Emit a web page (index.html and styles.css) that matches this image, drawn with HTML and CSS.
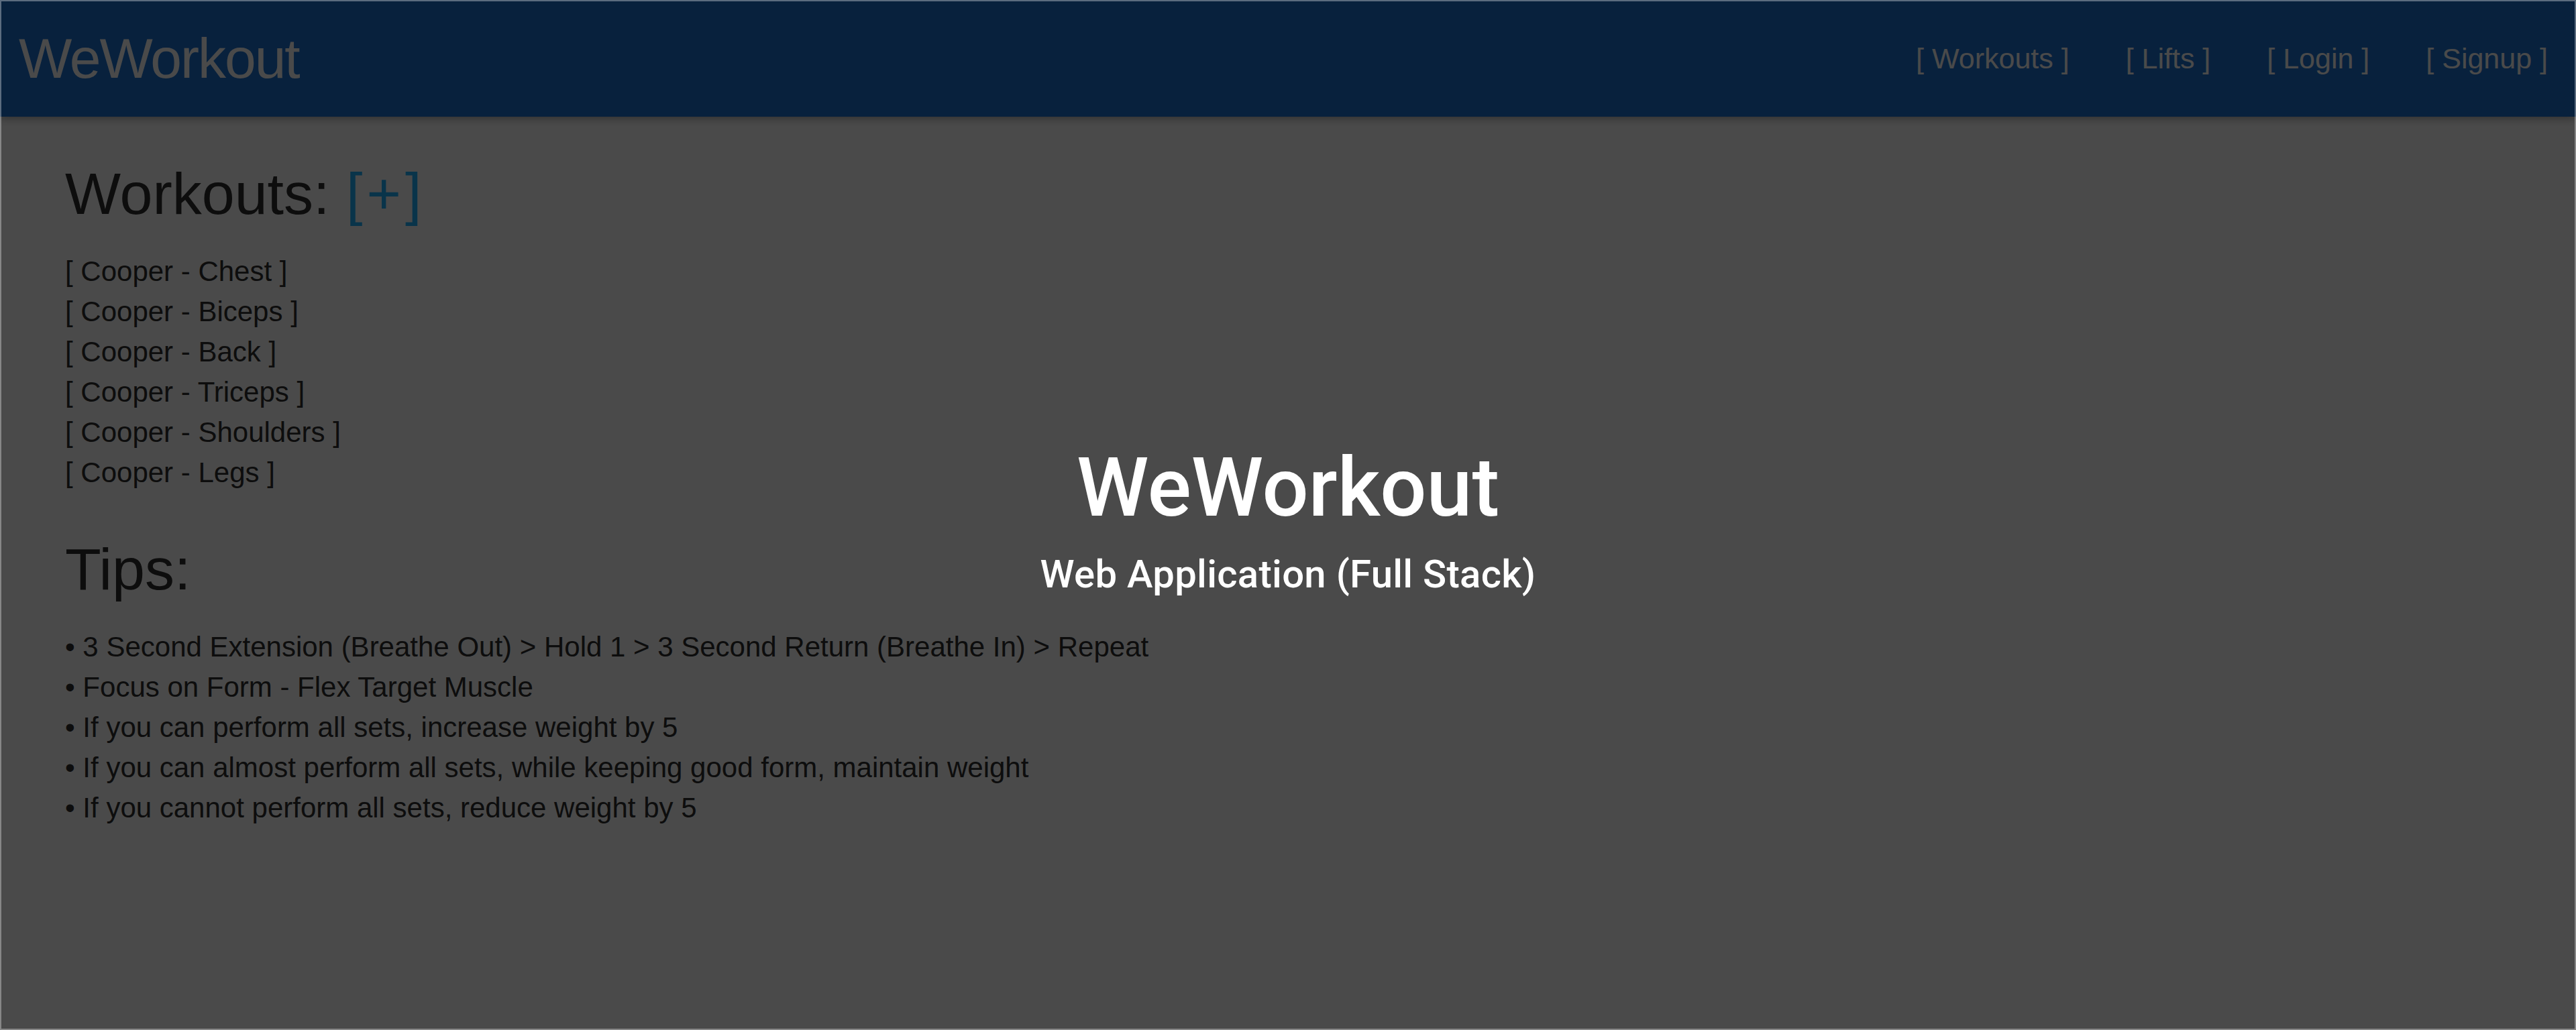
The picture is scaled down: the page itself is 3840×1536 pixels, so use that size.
FILE: index.html
```html
<!DOCTYPE html>
<html lang="en">
<head>
<meta charset="utf-8">
<title>WeWorkout</title>
<link rel="stylesheet" href="styles.css">
</head>
<body>
<div class="page">
  <header class="navbar">
    <a class="brand" href="#">WeWorkout</a>
    <nav class="nav-links">
      <a href="#">[ Workouts ]</a>
      <a href="#">[ Lifts ]</a>
      <a href="#">[ Login ]</a>
      <a href="#">[ Signup ]</a>
    </nav>
  </header>
  <main class="content">
    <h1 class="section-title">Workouts: <a class="add-link" href="#">[+]</a></h1>
    <ul class="workout-list">
      <li><a href="#">[ Cooper - Chest ]</a></li>
      <li><a href="#">[ Cooper - Biceps ]</a></li>
      <li><a href="#">[ Cooper - Back ]</a></li>
      <li><a href="#">[ Cooper - Triceps ]</a></li>
      <li><a href="#">[ Cooper - Shoulders ]</a></li>
      <li><a href="#">[ Cooper - Legs ]</a></li>
    </ul>
    <h1 class="section-title tips-title">Tips:</h1>
    <ul class="tips-list">
      <li>• 3 Second Extension (Breathe Out) &gt; Hold 1 &gt; 3 Second Return (Breathe In) &gt; Repeat</li>
      <li>• Focus on Form - Flex Target Muscle</li>
      <li>• If you can perform all sets, increase weight by 5</li>
      <li>• If you can almost perform all sets, while keeping good form, maintain weight</li>
      <li>• If you cannot perform all sets, reduce weight by 5</li>
    </ul>
  </main>
  <div class="overlay">
    <h2 class="overlay-title">WeWorkout</h2>
    <p class="overlay-subtitle">Web Application (Full Stack)</p>
  </div>
  <div class="frame"></div>
</div>
</body>
</html>
```
FILE: styles.css
```css
html, body {
  margin: 0;
  padding: 0;
}

body {
  font-family: "Liberation Sans", Arial, sans-serif;
  color: #333333;
  background: #ffffff;
}

a {
  color: inherit;
  text-decoration: none;
}

.page {
  position: relative;
  min-height: 1536px;
  background: #ffffff;
  overflow: hidden;
}

.navbar {
  display: flex;
  align-items: center;
  justify-content: space-between;
  height: 174px;
  padding: 0 42px 0 28px;
  background: #1c73d2;
  box-shadow: 0 3px 12px rgba(0, 0, 0, 0.35);
  position: relative;
}

.brand {
  color: #ffffff;
  font-size: 84px;
  letter-spacing: -2px;
}

.nav-links {
  display: flex;
  gap: 84px;
  font-size: 43px;
}

.nav-links a {
  color: #ffffff;
}

.content {
  padding: 66px 96px 0 97px;
}

.section-title {
  margin: 0;
  font-size: 88px;
  font-weight: 400;
  line-height: 97px;
  color: #2e2e2e;
}

.add-link {
  color: #22b2ff;
  letter-spacing: 0.07em;
}

.workout-list,
.tips-list {
  list-style: none;
  margin: 0;
  padding: 0;
  font-size: 42px;
  line-height: 60px;
  color: #2e2e2e;
}

.workout-list {
  margin-top: 38px;
}

.tips-title {
  margin-top: 65px;
}

.tips-list {
  margin-top: 38px;
}

.overlay {
  position: absolute;
  inset: 0;
  background: rgba(0, 0, 0, 0.71);
  display: flex;
  flex-direction: column;
  align-items: center;
  justify-content: center;
  padding-top: 8px;
  box-sizing: border-box;
  color: #ffffff;
  font-family: Roboto, "Liberation Sans", sans-serif;
}

.overlay-title {
  margin: 0;
  font-size: 122px;
  font-weight: 500;
  line-height: 146px;
}

.overlay-subtitle {
  margin: 22px 0 0;
  font-size: 58px;
  font-weight: 500;
  line-height: 66px;
  letter-spacing: 0.3px;
}

.frame {
  position: absolute;
  inset: 0;
  border: 2px solid rgba(255, 255, 255, 0.34);
  pointer-events: none;
}
```
